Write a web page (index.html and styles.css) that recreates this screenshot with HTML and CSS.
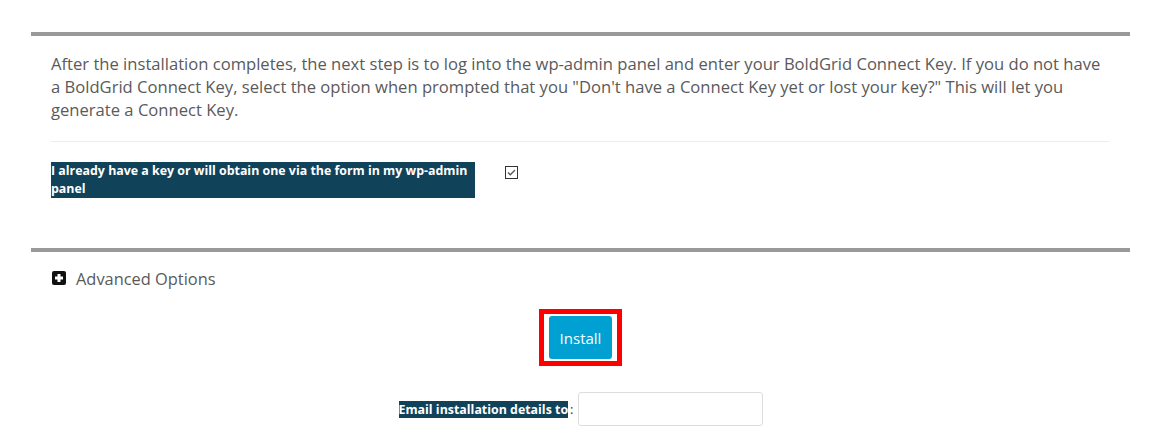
FILE: index.html
```html
<!DOCTYPE html>
<html lang="en">
<head>
<meta charset="utf-8">
<title>Install</title>
<link rel="stylesheet" href="styles.css">
</head>
<body>
<div class="page">
  <section class="panel">
    <p class="intro">After the installation completes, the next step is to log into the wp-admin panel and enter your BoldGrid Connect Key. If you do not have a BoldGrid Connect Key, select the option when prompted that you "Don't have a Connect Key yet or lost your key?" This will let you generate a Connect Key.</p>
    <hr class="sep">
    <div class="key-row">
      <label class="key-label" for="has-key">I already have a key or will obtain one via the form in my <span class="nowrap">wp-admin</span> panel</label>
      <span class="check" id="has-key" role="checkbox" aria-checked="true">
        <svg width="13" height="13" viewBox="0 0 13 13"><rect x="0.5" y="0.5" width="12" height="12" fill="#fff" stroke="#333"/><path d="M3 6.5 L5.3 8.8 L10 4" fill="none" stroke="#555" stroke-width="1.3"/></svg>
      </span>
    </div>
  </section>
  <section class="panel advanced">
    <div class="adv-toggle">
      <span class="plus"><svg width="14" height="14" viewBox="0 0 14 14"><rect x="0" y="0" width="14" height="14" rx="2" fill="#111"/><path d="M7 3 V11 M3 7 H11" stroke="#fff" stroke-width="3"/></svg></span>
      <span class="adv-text">Advanced Options</span>
    </div>
    <div class="install-wrap">
      <div class="highlight"><button class="install">Install</button></div>
    </div>
    <div class="email-row">
      <span class="email-label">Email installation details to</span><span class="colon">:</span>
      <input class="email-input" type="text">
    </div>
  </section>
</div>
</body>
</html>
```

FILE: styles.css
```css
* { box-sizing: border-box; }
html, body { margin: 0; padding: 0; background: #fff; }
body { font-family: "Open Sans", "Liberation Sans", sans-serif; color: #5b5b5b; }
.page { padding: 32px 31px 0 31px; width: 1161px; }
.panel { border-top: 4px solid #999; padding: 0 21px 0 20px; }
.intro { margin: 16px 0 0; font-size: 16.6px; line-height: 23px; color: #5a5a5a; }
.sep { margin: 20px 0 0; border: 0; border-top: 1px solid #ececec; height: 0; }
.key-row { display: flex; align-items: flex-start; margin-top: 20px; padding-bottom: 50px; }
.key-label { display: block; width: 424px; background: #10425a; color: #fff; font-weight: 700; font-size: 12.4px; line-height: 18px; }
.nowrap { white-space: nowrap; }
.check { display: block; margin: 4px 0 0 30px; width: 13px; height: 13px; }
.check svg { display: block; }
.advanced { padding-top: 20px; }
.adv-toggle { display: flex; align-items: center; height: 16px; margin-top: -2px; }
.plus { display: block; width: 14px; height: 14px; margin: 0 10px 0 1px; }
.plus svg { display: block; }
.adv-text { font-size: 16.4px; color: #5a5a5a; }
.install-wrap { display: flex; justify-content: center; margin-top: 23px; margin-left: -20px; margin-right: -21px; }
.highlight { border: 5px solid #f00; padding: 2px 5px; background: #fff; }
.install { display: block; width: 63px; height: 43px; border: 0; border-radius: 3px; background: #00a0d2; color: #fff; font-family: "Open Sans", "Liberation Sans", sans-serif; font-size: 15px; padding: 0; }
.email-row { display: flex; justify-content: center; align-items: center; margin: 26px -21px 0 -20px; }
.email-label { background: #10425a; color: #fff; font-weight: 700; font-size: 12.4px; line-height: 17px; }
.colon { font-size: 13px; color: #333; margin: 0 4px 0 2px; }
.email-input { width: 185px; height: 34px; border: 1px solid #ddd; border-radius: 3px; }
```
